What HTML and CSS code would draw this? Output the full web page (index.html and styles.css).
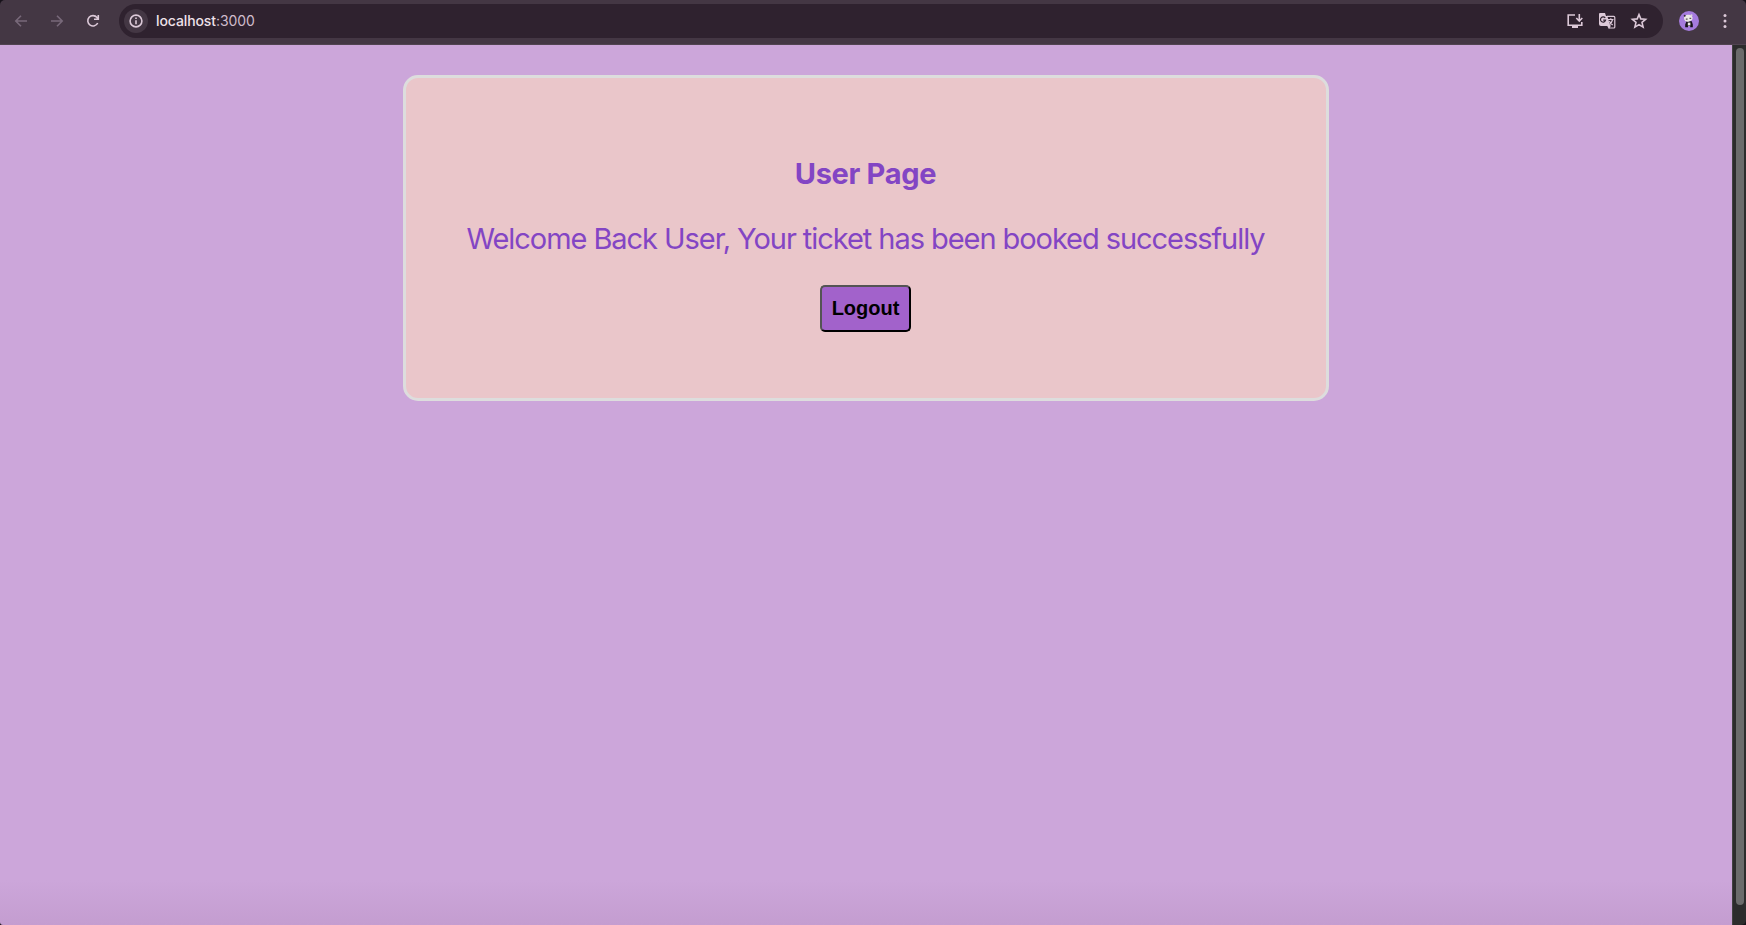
FILE: index.html
```html
<!DOCTYPE html>
<html lang="en">
<head>
<meta charset="utf-8">
<title>User Page</title>
<link rel="stylesheet" href="styles.css">
</head>
<body>
<header class="toolbar">
  <nav class="nav">
    <svg class="dim" width="14" height="14" viewBox="0 0 14 14"><path d="M13 7H2M7 1.8 1.8 7 7 12.2"/></svg>
    <svg class="dim" width="14" height="14" viewBox="0 0 14 14"><path d="M1 7h11M7 1.8 12.2 7 7 12.2"/></svg>
    <svg width="14" height="14" viewBox="0 0 14 14"><path d="M11.7 9A5.2 5.2 0 1 1 11 3.5L12.3 5M12.3 1v4.3H8"/></svg>
  </nav>
  <div class="address">
    <span class="info"><svg width="14" height="14" viewBox="0 0 14 14"><circle cx="7" cy="7" r="5.9"/><path d="M7 6.3v4M7 3.6v1.5"/></svg></span>
    <span class="url">localhost<span class="port">:3000</span></span>
    <div class="actions">
      <svg width="18" height="18" viewBox="0 0 18 18"><path d="M9 3H2.2v10.2h13.6V10M13.3 2v6.5M10.3 6l3 3 3-3"/><path class="solid" d="M6 13h6v3H6z"/></svg>
      <svg width="18" height="18" viewBox="0 0 18 18"><path class="solid" d="M2 1h5l1 3h1.5l3.5 10H3q-2 0-2-2V2q0-1 1-1z"/><path class="paper" d="M9.6 5h6.6v10h-3.6z"/><path class="thin" d="M9 4.4h6.8q1 0 1 1v9.6q0 1-1 1h-4.5"/><path class="cut" d="M7.2 6A2.6 2.6 0 1 0 7.6 8.2H5.2"/><path class="thin" d="M10 7.5h5.5M12.8 6.2v1.3M14.6 7.5q-.8 3.2-3 4.8M11.3 9q1.3 2.8 3.5 4"/><path class="solid" d="M9 13.5h4l-2 3.8z"/></svg>
      <svg width="18" height="18" viewBox="0 0 18 18"><path d="m9 2.6 1.8 4.3 4.8.4L12 10.4l1.1 4.7L9 12.6l-4.1 2.5L6 10.4 2.4 7.3l4.8-.4z"/></svg>
    </div>
  </div>
  <svg class="avatar" width="20" height="20" viewBox="0 0 20 20"><circle cx="10" cy="10" r="10" fill="#a57bdd"/><path d="M7.5 10.3h5.3l1 3.2v2.8h-2.6v-1.2H9v1.2H6.2v-2.8z" fill="#17131a"/><path d="M8.8 11.6h2.6v2.9H8.8z" fill="#ece9e6"/><ellipse cx="9.3" cy="7.2" rx="4.3" ry="3.4" fill="#ece9e6" transform="rotate(-12 9.3 7.2)"/><circle cx="5.7" cy="4.7" r="1" fill="#332b38"/><circle cx="12.5" cy="4.2" r="1" fill="#d8d2da"/><path d="M6.8 7.6h1.8v1.1H6.8zM10.5 6.8h1.7v1.1h-1.7z" fill="#555"/></svg>
  <svg class="menu" width="4" height="16" viewBox="0 0 4 16"><circle cx="2" cy="2.4" r="1.5"/><circle cx="2" cy="8" r="1.5"/><circle cx="2" cy="13.6" r="1.5"/></svg>
</header>
<div class="viewport">
  <main class="page">
    <section class="card">
      <h1 class="title">User Page</h1>
      <p class="message">Welcome Back User, Your ticket has been booked successfully</p>
      <button class="logout">Logout</button>
    </section>
  </main>
  <div class="scrollbar"><div class="thumb"></div></div>
</div>
</body>
</html>
```
FILE: styles.css
```css
* { box-sizing: border-box; }
body {
  margin: 0;
  height: 925px;
  display: flex;
  flex-direction: column;
  overflow: hidden;
  background: #17121a;
  font-family: Inter, "Liberation Sans", sans-serif;
}
svg { display: block; flex: none; fill: none; stroke: #dcc9d8; stroke-width: 1.6; }
.toolbar {
  height: 45px;
  flex: none;
  display: flex;
  align-items: center;
  padding: 0 19px 3px 14px;
  background: #443744;
  border-bottom: 1px solid #514451;
  border-radius: 5px 5px 0 0;
}
.nav { display: flex; gap: 22px; width: 105px; }
.dim { stroke: #78697a; }
.address {
  width: 1544px;
  height: 34px;
  display: flex;
  align-items: center;
  padding: 0 15px 0 5px;
  border-radius: 17px;
  background: #2f222f;
}
.info {
  width: 24px;
  height: 24px;
  display: grid;
  place-items: center;
  border-radius: 50%;
  background: #443744;
}
.url { margin-left: 8px; font-size: 14px; line-height: 20px; font-weight: 500; letter-spacing: -0.1px; color: #eee0e9; }
.port { font-weight: 400; color: #cfbccc; }
.actions { display: flex; gap: 14px; margin-left: auto; }
.solid { fill: #dcc9d8; stroke: none; }
.paper { fill: #2f222f; stroke: none; }
.thin { stroke-width: 1.2; }
.cut { stroke: #2f222f; stroke-width: 1.2; }
.avatar { margin-left: 16px; stroke: none; }
.menu { margin-left: auto; fill: #dcc9d8; stroke: none; }
.viewport { flex: 1; display: flex; min-height: 0; }
.page {
  width: 1732px;
  padding-top: 30px;
  background: linear-gradient(to bottom, #cca6da 0, #cca6da 835px, #c49dd0 100%);
  border-radius: 0 0 0 3px;
}
.card {
  width: 926px;
  height: 326px;
  margin: 0 auto;
  padding: 78px 1px 0 0;
  display: flex;
  flex-direction: column;
  align-items: center;
  border: 3px solid #dddddd;
  border-radius: 15px;
  background: #eac6ca;
  color: #8345c4;
}
.title {
  margin: 0;
  font-size: 29px;
  line-height: 36px;
  font-weight: 700;
  letter-spacing: -0.3px;
  white-space: nowrap;
}
.message {
  margin: 29px 0 0;
  font-size: 29px;
  line-height: 36px;
  font-weight: 400;
  letter-spacing: -1.06px;
  white-space: nowrap;
}
.logout {
  width: 91px;
  height: 47px;
  margin-top: 28px;
  padding: 0;
  border: 2px outset #000;
  border-radius: 5px;
  background: #a262cb;
  color: #000;
  font: bold 20px "Liberation Sans", sans-serif;
}
.scrollbar {
  width: 14px;
  padding: 3px 2px 20px 3px;
  background: #2c2c2c;
  border-left: 1px solid #414141;
  border-bottom-right-radius: 5px;
}
.thumb { height: 100%; border-radius: 4px; background: #6b6b6b; }
```
